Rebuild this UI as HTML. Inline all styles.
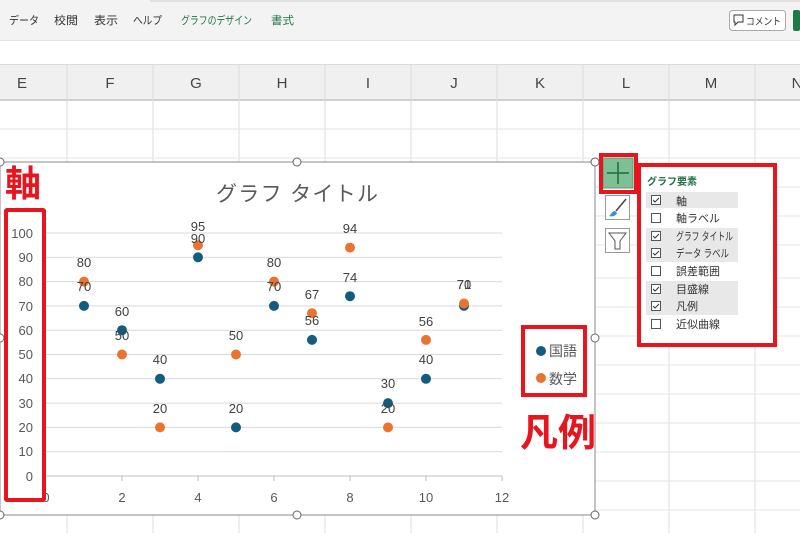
<!DOCTYPE html>
<html><head><meta charset="utf-8"><style>
body{margin:0;width:800px;height:533px;overflow:hidden;background:#fff;font-family:"Liberation Sans","Noto Sans CJK JP",sans-serif;}
</style></head><body>
<svg width="800" height="533" xmlns="http://www.w3.org/2000/svg" font-family="Liberation Sans, Noto Sans CJK JP, sans-serif">
<rect x="0" y="0" width="800" height="40" fill="#f3f3f3"/>
<rect x="150" y="0" width="650" height="2" fill="#e0e0e0"/>
<g font-size="11" fill="#333">
<text x="9" y="24" textLength="30" lengthAdjust="spacingAndGlyphs">データ</text><text x="54" y="24" textLength="24" lengthAdjust="spacingAndGlyphs">校閲</text><text x="94" y="24" textLength="24" lengthAdjust="spacingAndGlyphs">表示</text><text x="133" y="24" textLength="29" lengthAdjust="spacingAndGlyphs">ヘルプ</text>
<text x="181" y="24" fill="#217346" textLength="71" lengthAdjust="spacingAndGlyphs">グラフのデザイン</text><text x="271" y="24" fill="#217346" textLength="23" lengthAdjust="spacingAndGlyphs">書式</text>
</g>
<rect x="729.5" y="10.5" width="56" height="20" rx="3" fill="#fff" stroke="#aaa"/>
<path d="M734 15h9v7h-5l-3 3v-3h-1z" fill="none" stroke="#333"/>
<text x="746" y="25" font-size="10" fill="#333" textLength="35" lengthAdjust="spacingAndGlyphs">コメント</text>
<rect x="793" y="10" width="7" height="21" rx="2" fill="#1e7b45"/>
<rect x="0" y="40" width="800" height="1" fill="#e3e3e3"/>
<rect x="0" y="64" width="800" height="36" fill="#f0f0f0"/>
<rect x="0" y="64" width="800" height="1" fill="#dadada"/>
<rect x="0" y="99" width="800" height="2" fill="#d0d0d0"/>
<g stroke="#dcdcdc">
<line x1="67" y1="65" x2="67" y2="533"/><line x1="153" y1="65" x2="153" y2="533"/><line x1="239" y1="65" x2="239" y2="533"/><line x1="325" y1="65" x2="325" y2="533"/><line x1="411" y1="65" x2="411" y2="533"/><line x1="497" y1="65" x2="497" y2="533"/><line x1="583" y1="65" x2="583" y2="533"/><line x1="669" y1="65" x2="669" y2="533"/><line x1="755" y1="65" x2="755" y2="533"/>
</g>
<g stroke="#e6e6e6">
<line x1="0" x2="800" y1="129" y2="129"/><line x1="0" x2="800" y1="158" y2="158"/><line x1="0" x2="800" y1="187" y2="187"/><line x1="0" x2="800" y1="216" y2="216"/><line x1="0" x2="800" y1="245" y2="245"/><line x1="0" x2="800" y1="278" y2="278"/><line x1="0" x2="800" y1="307" y2="307"/><line x1="0" x2="800" y1="336" y2="336"/><line x1="0" x2="800" y1="365" y2="365"/><line x1="0" x2="800" y1="394" y2="394"/><line x1="0" x2="800" y1="423" y2="423"/><line x1="0" x2="800" y1="452" y2="452"/><line x1="0" x2="800" y1="481" y2="481"/><line x1="0" x2="800" y1="510" y2="510"/>
</g>
<g font-size="15" fill="#444" text-anchor="middle">
<text x="22" y="88">E</text><text x="110" y="88">F</text><text x="196" y="88">G</text><text x="282" y="88">H</text><text x="368" y="88">I</text><text x="454" y="88">J</text><text x="540" y="88">K</text><text x="626" y="88">L</text><text x="711" y="88">M</text><text x="797" y="88">N</text>
</g>
<rect x="0" y="162" width="595" height="353" fill="#fff" stroke="#888"/>
<text x="216" y="201" font-size="21" fill="#595959" textLength="162" lengthAdjust="spacing">グラフ タイトル</text>
<g stroke="#d9d9d9">
<line x1="46" x2="502" y1="233" y2="233"/><line x1="46" x2="502" y1="257.3" y2="257.3"/><line x1="46" x2="502" y1="281.6" y2="281.6"/><line x1="46" x2="502" y1="305.9" y2="305.9"/><line x1="46" x2="502" y1="330.2" y2="330.2"/><line x1="46" x2="502" y1="354.5" y2="354.5"/><line x1="46" x2="502" y1="378.8" y2="378.8"/><line x1="46" x2="502" y1="403.1" y2="403.1"/><line x1="46" x2="502" y1="427.4" y2="427.4"/><line x1="46" x2="502" y1="451.7" y2="451.7"/>
</g>
<line x1="46" x2="502" y1="476" y2="476" stroke="#bfbfbf"/>
<g stroke="#bfbfbf"><line x1="122" x2="122" y1="476" y2="481"/><line x1="198" x2="198" y1="476" y2="481"/><line x1="274" x2="274" y1="476" y2="481"/><line x1="350" x2="350" y1="476" y2="481"/><line x1="426" x2="426" y1="476" y2="481"/><line x1="502" x2="502" y1="476" y2="481"/></g>
<g font-size="13" fill="#595959" text-anchor="end">
<text x="33" y="238">100</text><text x="33" y="262">90</text><text x="33" y="286">80</text><text x="33" y="311">70</text><text x="33" y="335">60</text><text x="33" y="359">50</text><text x="33" y="383">40</text><text x="33" y="408">30</text><text x="33" y="432">20</text><text x="33" y="456">10</text><text x="33" y="481">0</text>
</g>
<g font-size="13" fill="#595959" text-anchor="middle">
<text x="46" y="502">0</text><text x="122" y="502">2</text><text x="198" y="502">4</text><text x="274" y="502">6</text><text x="350" y="502">8</text><text x="426" y="502">10</text><text x="502" y="502">12</text>
</g>
<g fill="#eb7330">
<circle cx="84" cy="281.6" r="5"/><circle cx="122" cy="354.5" r="5"/><circle cx="160" cy="427.4" r="5"/><circle cx="198" cy="245.2" r="5"/><circle cx="236" cy="354.5" r="5"/><circle cx="274" cy="281.6" r="5"/><circle cx="312" cy="313.2" r="5"/><circle cx="350" cy="247.6" r="5"/><circle cx="388" cy="427.4" r="5"/><circle cx="426" cy="339.9" r="5"/>
</g>
<g fill="#145b80">
<circle cx="84" cy="305.9" r="5"/><circle cx="122" cy="330.2" r="5"/><circle cx="160" cy="378.8" r="5"/><circle cx="198" cy="257.3" r="5"/><circle cx="236" cy="427.4" r="5"/><circle cx="274" cy="305.9" r="5"/><circle cx="312" cy="339.9" r="5"/><circle cx="350" cy="296.2" r="5"/><circle cx="388" cy="403.1" r="5"/><circle cx="426" cy="378.8" r="5"/><circle cx="464" cy="305.9" r="5"/>
</g>
<circle cx="464" cy="303.5" r="5" fill="#eb7330"/>
<g font-size="13" fill="#404040" text-anchor="middle">
<text x="84" y="267">80</text><text x="122" y="340">50</text><text x="160" y="413">20</text><text x="198" y="231">95</text><text x="236" y="340">50</text><text x="274" y="267">80</text><text x="312" y="299">67</text><text x="350" y="233">94</text><text x="388" y="413">20</text><text x="426" y="326">56</text><text x="464" y="289">71</text>
<text x="84" y="291">70</text><text x="122" y="316">60</text><text x="160" y="364">40</text><text x="198" y="243">90</text><text x="236" y="413">20</text><text x="274" y="291">70</text><text x="312" y="325">56</text><text x="350" y="282">74</text><text x="388" y="388">30</text><text x="426" y="364">40</text><text x="464" y="289">70</text>
</g>
<circle cx="541" cy="351" r="5" fill="#145b80"/><text x="549" y="356" font-size="14" fill="#595959">国語</text>
<circle cx="541" cy="378" r="5" fill="#eb7330"/><text x="549" y="384" font-size="14" fill="#595959">数学</text>
<g fill="#fff" stroke="#666">
<circle cx="0" cy="162" r="4"/><circle cx="297" cy="162" r="4"/><circle cx="595" cy="162" r="4"/><circle cx="0" cy="338" r="4"/><circle cx="595" cy="338" r="4"/><circle cx="0" cy="515" r="4"/><circle cx="297" cy="515" r="4"/><circle cx="595" cy="515" r="4"/>
</g>
<rect x="603" y="158" width="30" height="30" fill="#7fbf95" stroke="#5a9a70"/>
<path d="M618 162v22M607 173h22" stroke="#1e6b3a" stroke-width="1.5"/>
<rect x="605.5" y="195.5" width="24" height="24" fill="#fff" stroke="#999"/>
<path d="M626 199l-10 12" stroke="#444" stroke-width="1.5"/><path d="M609 216c2-1 3-5 6-5l2 2c-1 3-5 4-8 3z" fill="#3b8fd6"/>
<rect x="605.5" y="228.5" width="24" height="24" fill="#fff" stroke="#999"/>
<path d="M609 233h17l-6 8v8h-5v-8z" fill="none" stroke="#555"/>
<rect x="639" y="165" width="136" height="178" fill="#fff"/>
<text x="647" y="185" font-size="10" font-weight="bold" fill="#217346">グラフ要素</text>
<rect x="646" y="192" width="92" height="16" fill="#e8e8e8"/>
<rect x="646" y="228" width="92" height="34" fill="#e8e8e8"/>
<rect x="646" y="281" width="92" height="34" fill="#e8e8e8"/>
<g fill="#fff" stroke="#555"><rect x="651.5" y="195.5" width="9" height="9"/><rect x="651.5" y="213.5" width="9" height="9"/><rect x="651.5" y="231.5" width="9" height="9"/><rect x="651.5" y="248.5" width="9" height="9"/><rect x="651.5" y="266.5" width="9" height="9"/><rect x="651.5" y="284.5" width="9" height="9"/><rect x="651.5" y="301.5" width="9" height="9"/><rect x="651.5" y="319.5" width="9" height="9"/></g>
<g fill="none" stroke="#333"><path d="M653 200l2 2 4-4"/><path d="M653 236l2 2 4-4"/><path d="M653 253l2 2 4-4"/><path d="M653 289l2 2 4-4"/><path d="M653 306l2 2 4-4"/></g>
<g font-size="11" fill="#333"><text x="676" y="205">軸</text><text x="676" y="222">軸ラベル</text><text x="676" y="240" textLength="57" lengthAdjust="spacingAndGlyphs">グラフ タイトル</text><text x="676" y="257" textLength="53" lengthAdjust="spacingAndGlyphs">データ ラベル</text><text x="676" y="275">誤差範囲</text><text x="676" y="293">目盛線</text><text x="676" y="310">凡例</text><text x="676" y="328">近似曲線</text></g>
<g fill="none" stroke="#e8141e" stroke-width="4">
<rect x="6" y="210" width="38" height="290" rx="1"/>
<rect x="601" y="155" width="35" height="37"/>
<rect x="639" y="165" width="136" height="180"/>
<rect x="523" y="327" width="62" height="68"/>
</g>
<text x="5" y="196" font-size="36" font-weight="bold" fill="#e8141e">軸</text>
<text x="520" y="446" font-size="38" font-weight="bold" fill="#e8141e">凡例</text>
</svg>
</body></html>
